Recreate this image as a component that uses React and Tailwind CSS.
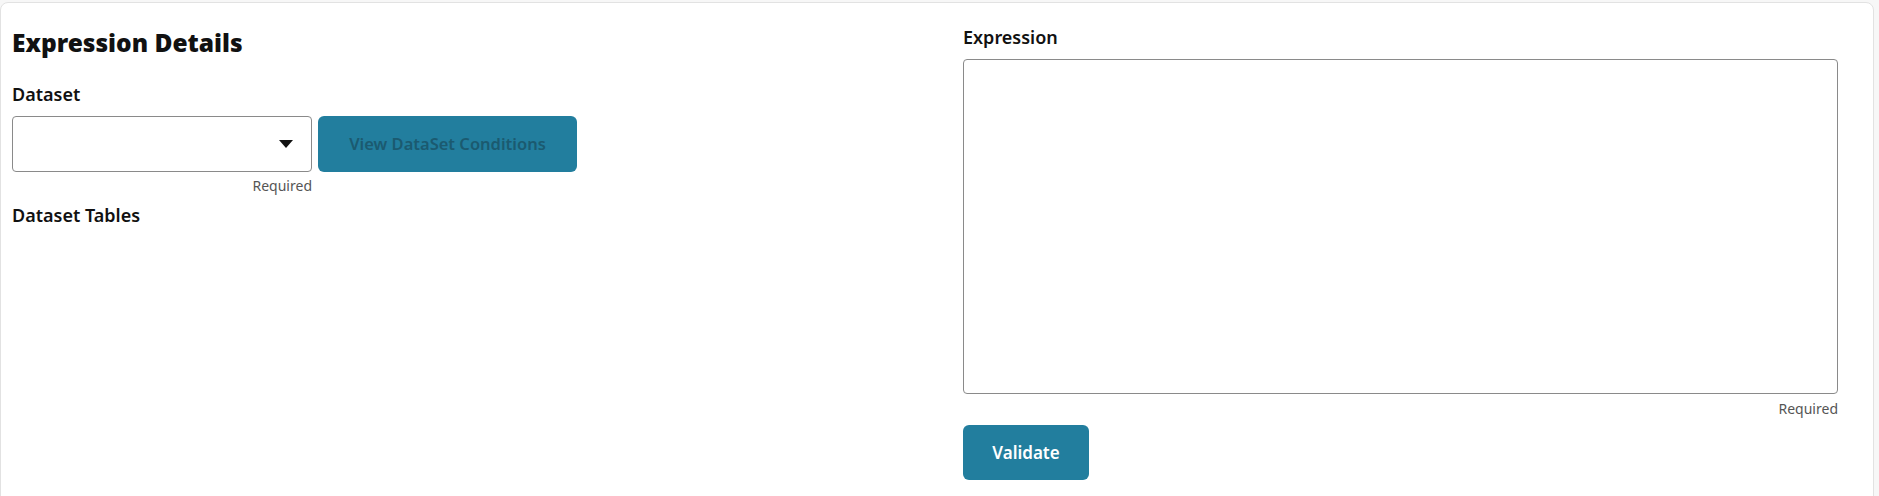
import React from "react";

const font = { fontFamily: "'Noto Sans', 'Open Sans', sans-serif" };

const App = () => {
  return (
    <div className="w-[1879px] h-[496px] bg-[#f7f7f7] pt-[2px] overflow-hidden" style={font}>
      <div className="w-[1874px] h-[520px] bg-white border border-[#e2e2e2] rounded-[8px] flex pl-[11px] text-[#111]">
        {/* left column */}
        <div className="w-[951px] shrink-0 pt-[24px]">
          <h2 className="text-[24.5px] leading-[32px] font-black">Expression Details</h2>
          <label className="block mt-[24px] text-[18px] leading-[22px] font-semibold">Dataset</label>
          <div className="flex gap-[6px] mt-[11px]">
            <div className="flex flex-col items-end">
              <div className="w-[300px] h-[56px] border border-[#8a8a8a] rounded-[4px] flex items-center justify-end pr-[18px] bg-white">
                <svg width="14" height="8" viewBox="0 0 14 8">
                  <path d="M0 0 L14 0 L7 8 Z" fill="#111" />
                </svg>
              </div>
              <span className="text-[14px] leading-[28px] text-[#555]">Required</span>
            </div>
            <button
              disabled
              className="w-[259px] h-[56px] rounded-[6px] bg-[#227e9e] text-[#1b5a70] text-[16.5px] font-semibold"
            >
              View DataSet Conditions
            </button>
          </div>
          <label className="block mt-[4px] text-[18px] leading-[22px] font-semibold">Dataset Tables</label>
        </div>

        {/* right column */}
        <div className="w-[875px] shrink-0 pt-[23px]">
          <label className="block text-[18px] leading-[22px] font-semibold">Expression</label>
          <textarea className="block w-[875px] h-[335px] mt-[11px] border border-[#8a8a8a] rounded-[4px] resize-none outline-none" />
          <div className="text-right text-[14px] leading-[20px] text-[#555] mt-[5px]">Required</div>
          <button className="mt-[6px] w-[126px] h-[55px] rounded-[6px] bg-[#227e9e] text-white text-[17px] font-semibold">
            Validate
          </button>
        </div>
      </div>
    </div>
  );
};

export default App;
